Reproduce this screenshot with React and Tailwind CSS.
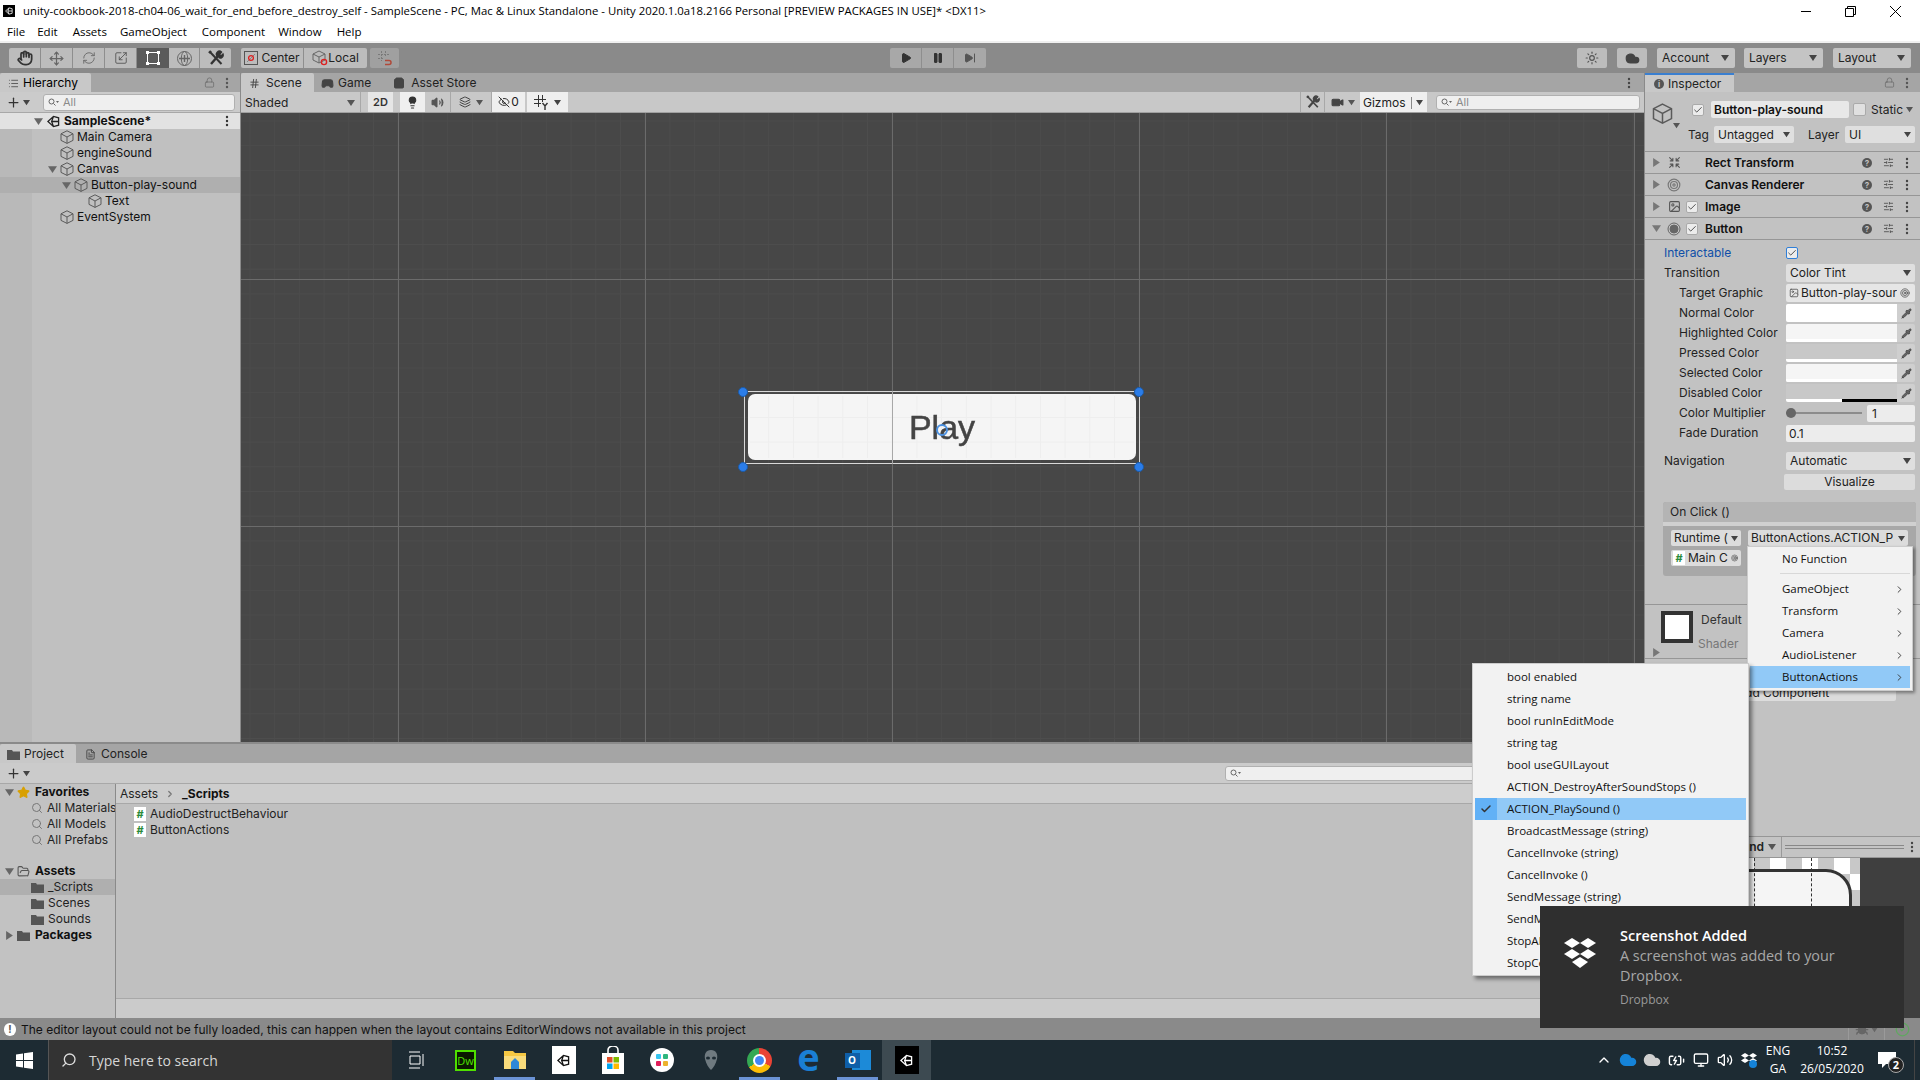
import { Hand, Move, RefreshCw, Scaling, Play, Pause, SkipForward, Sun, Cloud, Search, Lock, Star, ChevronRight, ChevronUp, Volume2, Monitor, BatteryCharging, Lightbulb, Video, Layers, EyeOff, Hash, Check, List, Pipette, Image, SlidersHorizontal, FolderOpen, Gamepad2, ShoppingBag, FileText, Shrink, Target, Plus, Bug, CircleCheck } from "lucide-react";

const Tri = ({ dir = "down", color = "#555", size = 8, className = "" }) => (
  <svg width={size} height={size} viewBox="0 0 8 8" className={`shrink-0 ${className}`}>
    {dir === "down" ? <polygon points="0,1 8,1 4,7" fill={color} /> : <polygon points="1,0 7,4 1,8" fill={color} />}
  </svg>
);

const Cube = ({ size = 14, color = "#5a5a5a" }) => (
  <svg width={size} height={size} viewBox="0 0 14 14" fill="none" stroke={color} strokeWidth="1" className="shrink-0">
    <path d="M7 .8 13 3.8V10.4L7 13.4 1 10.4V3.8Z M1 3.8 7 7 13 3.8 M7 7V13.4" />
  </svg>
);

const Dots = ({ color = "#444" }) => (
  <svg width="4" height="12" viewBox="0 0 4 12" className="shrink-0">
    <circle cx="2" cy="2" r="1.2" fill={color} />
    <circle cx="2" cy="6" r="1.2" fill={color} />
    <circle cx="2" cy="10" r="1.2" fill={color} />
  </svg>
);

const UnityMark = ({ size = 14, color = "#222" }) => (
  <svg width={size} height={size} viewBox="0 0 14 14" fill="none" stroke={color} strokeWidth="1.4" className="shrink-0">
    <path d="M1 7 7 1.5 12.5 3V11L7 12.5Z M5 7H12.5 M7 1.5 5 7 7 12.5" />
  </svg>
);

const ToolsIcon = ({ size = 16, color = "#333" }) => (
  <svg width={size} height={size} viewBox="0 0 16 16" fill="none" stroke={color} className="shrink-0">
    <path d="M3 14 10 6" strokeWidth="2.4" />
    <path d="M9.5 6.5A3 3 0 0 1 13.5 2L11.5 4.5 13 6 15 4A3 3 0 0 1 10.5 7.5" strokeWidth="1.4" fill={color} />
    <path d="M2 2 13.5 14" strokeWidth="2" />
    <path d="M1 3 3 1" strokeWidth="2.4" />
  </svg>
);

const RectTool = () => (
  <svg width="16" height="16" viewBox="0 0 16 16" fill="#fff">
    <rect x="2.5" y="2.5" width="11" height="11" fill="none" stroke="#fff" />
    <rect x="1" y="1" width="3" height="3" />
    <rect x="12" y="1" width="3" height="3" />
    <rect x="1" y="12" width="3" height="3" />
    <rect x="12" y="12" width="3" height="3" />
  </svg>
);

const TransformTool = () => (
  <svg width="17" height="17" viewBox="0 0 17 17" fill="none" stroke="#666">
    <circle cx="8.5" cy="8.5" r="7" />
    <ellipse cx="8.5" cy="8.5" rx="3.2" ry="7" />
    <path d="M3 8.5H14 M8.5 5V12" strokeWidth="1.4" />
  </svg>
);

const GridY = () => (
  <svg width="15" height="15" viewBox="0 0 15 15" fill="none" stroke="#333" className="shrink-0">
    <path d="M4.5 0V12 M8.5 0V7 M0 4.5H12 M0 8.5H7" />
    <path d="M8.5 8 11 11 13.5 8 M11 11V15" strokeWidth="1.4" />
  </svg>
);

const SnapIcon = () => (
  <svg width="16" height="16" viewBox="0 0 16 16" fill="none" stroke="#7a7a7a">
    <path d="M4.5 1V11 M8.5 1V6 M1 4.5H12 M1 8.5H6" strokeDasharray="2 1" />
    <path d="M8 10.5H12A2 2 0 0 1 12 14.5H8" stroke="#b04a3a" strokeWidth="1.5" />
  </svg>
);

const ScriptIcon = () => (
  <span className="w-[12px] h-[14px] bg-white flex items-center justify-center text-[#2a8a3a] text-[11px] font-bold leading-none shrink-0">#</span>
);

const FolderIcon = () => (
  <svg width="13" height="11" viewBox="0 0 13 11" className="shrink-0">
    <path d="M0 1H5L6 2.5H13V11H0Z" fill="#555" />
  </svg>
);

const Check12 = ({ blue }) => (
  <span className={`w-[12px] h-[12px] rounded-[2px] flex items-center justify-center bg-[#ececec] border shrink-0 ${blue ? "border-[#2f7fd8]" : "border-[#aaa]"}`}>
    <Check size={10} strokeWidth={2} color="#333" />
  </span>
);

const Magnifier = () => (
  <svg width="11" height="8" viewBox="0 0 11 8" fill="none" stroke="#666" className="shrink-0">
    <circle cx="3.5" cy="3.5" r="2.5" />
    <path d="M5.5 5.5 7.5 7.5" />
    <polygon points="8,3 11,3 9.5,5" fill="#666" stroke="none" />
  </svg>
);

const SearchBox = ({ className = "", text = "All" }) => (
  <div className={`h-[15px] rounded-[3px] bg-[#efefef] border border-[#b0b0b0] flex items-center pl-[4px] gap-[4px] text-[#8a8a8a] text-[11px] ${className}`}>
    <Magnifier />
    {text}
  </div>
);

const TitleBar = () => (
  <div className="h-[22px] bg-white flex items-center [font-family:'Open_Sans',sans-serif] text-[11.37px] text-black relative">
    <div className="w-[12px] h-[12px] bg-black ml-[3px] mr-[8px] flex items-center justify-center">
      <UnityMark size={8} color="#fff" />
    </div>
    <span className="whitespace-nowrap">unity-cookbook-2018-ch04-06_wait_for_end_before_destroy_self - SampleScene - PC, Mac &amp; Linux Standalone - Unity 2020.1.0a18.2166 Personal [PREVIEW PACKAGES IN USE]* &lt;DX11&gt;</span>
    <div className="ml-auto flex items-center gap-[34px] pr-[19px]">
      <div className="w-[10px] h-px bg-black" />
      <svg width="11" height="11" viewBox="0 0 11 11" fill="none" stroke="#000"><path d="M.5 2.5H8.5V10.5H.5Z M2.5 2.5V.5H10.5V8.5H8.5" /></svg>
      <svg width="11" height="11" viewBox="0 0 11 11" stroke="#000" strokeWidth="1"><path d="M0 0 11 11M11 0 0 11" /></svg>
    </div>
  </div>
);

const menuNames = ["File", "Edit", "Assets", "GameObject", "Component", "Window", "Help"];
const menuGaps = ["ml-[7px]", "ml-[12px]", "ml-[15px]", "ml-[13px]", "ml-[15px]", "ml-[13px]", "ml-[15px]"];

const MenuBar = () => (
  <div className="h-[21px] bg-white border-b-2 border-[#f0f0f0] flex items-center [font-family:'Open_Sans',sans-serif] text-[11.5px] text-black">
    {menuNames.map((name, i) => (
      <span key={name} className={menuGaps[i]}>{name}</span>
    ))}
  </div>
);

const toolBtn = "h-[20px] flex items-center justify-center bg-[#bcbcbc] border-r border-[#8e8e8e]";

const Dropdown = ({ label, w }) => (
  <div className={`h-[20px] rounded-[2px] bg-[#c4c4c4] flex items-center justify-between pl-[5px] pr-[6px] text-[12px] text-[#222] ${w}`}>
    {label}
    <Tri color="#444" />
  </div>
);

const Toolbar = () => (
  <div className="h-[30px] bg-[#8a8a8a] flex items-center relative">
    <div className="ml-[9px] flex rounded-[2px] overflow-hidden">
      <div className={`${toolBtn} w-[32px]`}><Hand size={16} color="#333" strokeWidth={2.6} /></div>
      <div className={`${toolBtn} w-[32px]`}><Move size={15} color="#666" /></div>
      <div className={`${toolBtn} w-[32px]`}><RefreshCw size={14} color="#666" strokeWidth={1.5} /></div>
      <div className={`${toolBtn} w-[32px]`}><Scaling size={14} color="#555" strokeWidth={1.5} /></div>
      <div className="h-[20px] w-[32px] flex items-center justify-center bg-[#5b5b5b]"><RectTool /></div>
      <div className={`${toolBtn} w-[31px]`}><TransformTool /></div>
      <div className="h-[20px] w-[31px] flex items-center justify-center bg-[#bcbcbc]"><ToolsIcon /></div>
    </div>
    <div className="ml-[10px] flex rounded-[2px] overflow-hidden text-[12px] text-[#222]">
      <div className={`${toolBtn} w-[63px] gap-[3px]`}>
        <svg width="14" height="14" viewBox="0 0 14 14" fill="none" className="shrink-0">
          <rect x=".5" y=".5" width="13" height="13" stroke="#555" />
          <path d="M3 11 11 3" stroke="#888" />
          <circle cx="7" cy="7" r="2.4" stroke="#d22" strokeWidth="1.3" />
        </svg>
        Center
      </div>
      <div className="h-[20px] w-[63px] flex items-center justify-center bg-[#bcbcbc]">
        <svg width="16" height="16" viewBox="0 0 16 16" fill="none" className="shrink-0">
          <path d="M7 1 13 4V10L7 13 1 10V4Z M1 4 7 7 13 4 M7 7V13" stroke="#666" />
          <circle cx="12" cy="12" r="2.6" stroke="#d22" strokeWidth="1.4" />
        </svg>
        Local
      </div>
    </div>
    <div className="ml-[3px] w-[29px] h-[20px] rounded-[2px] bg-[#a0a0a0] flex items-center justify-center">
      <SnapIcon />
    </div>
    <div className="ml-[491px] flex rounded-[2px] overflow-hidden">
      <div className="h-[20px] w-[32px] flex items-center justify-center bg-[#a8a8a8] border-r border-[#8e8e8e]"><Play size={12} color="#333" fill="#333" /></div>
      <div className="h-[20px] w-[32px] flex items-center justify-center bg-[#a8a8a8] border-r border-[#8e8e8e]"><Pause size={12} color="#333" fill="#333" /></div>
      <div className="h-[20px] w-[32px] flex items-center justify-center bg-[#a8a8a8]"><SkipForward size={12} color="#555" fill="#555" /></div>
    </div>
    <div className="ml-auto flex items-center pr-[9px]">
      <div className="w-[30px] h-[20px] rounded-[2px] bg-[#bcbcbc] flex items-center justify-center"><Sun size={14} color="#555" /></div>
      <div className="ml-[10px] w-[30px] h-[20px] rounded-[2px] bg-[#bcbcbc] flex items-center justify-center"><Cloud size={15} color="#444" fill="#444" /></div>
      <Dropdown label="Account" w="ml-[10px] w-[78px]" />
      <Dropdown label="Layers" w="ml-[9px] w-[79px]" />
      <Dropdown label="Layout" w="ml-[10px] w-[78px]" />
    </div>
  </div>
);

const treeRows = [
  { name: "Main Camera", pad: "pl-[60px]" },
  { name: "engineSound", pad: "pl-[60px]" },
  { name: "Canvas", pad: "pl-[60px]", open: true },
  { name: "Button-play-sound", pad: "pl-[74px]", open: true, sel: true },
  { name: "Text", pad: "pl-[88px]" },
  { name: "EventSystem", pad: "pl-[60px]" },
];

const Hierarchy = () => (
  <div className="w-[241px] shrink-0 flex flex-col bg-[#c0c0c0] border-r border-[#8a8a8a]">
    <div className="h-[19px] bg-[#a5a5a5] flex items-center text-[12px]">
      <div className="w-[91px] h-full bg-[#c8c8c8] rounded-t-[2px] flex items-center pl-[8px] pt-[1px] gap-[4px]">
        <List size={11} color="#555" />
        Hierarchy
      </div>
      <div className="ml-auto flex items-center gap-[10px] pr-[11px]">
        <Lock size={11} color="#666" strokeWidth={1.5} />
        <Dots color="#555" />
      </div>
    </div>
    <div className="h-[21px] bg-[#cbcbcb] flex items-center pl-[6px] border-b border-[#a8a8a8]">
      <Plus size={15} color="#333" strokeWidth={2} />
      <Tri color="#444" size={7} className="ml-[2px]" />
      <SearchBox className="ml-[13px] w-[192px] h-[17px]" />
    </div>
    <div className="h-[16px] bg-[#e2e2e2] flex items-center pl-[34px] gap-[4px] text-[12px] font-bold text-[#111]">
      <Tri color="#666" size={9} />
      <UnityMark size={13} />
      SampleScene*
      <span className="ml-auto pr-[11px]"><Dots color="#333" /></span>
    </div>
    <div className="flex-1 bg-[linear-gradient(90deg,#b9b9b9_32px,#c0c0c0_32px)]">
      {treeRows.map((r) => (
        <div key={r.name} className={`h-[16px] flex items-center gap-[3px] text-[12px] text-[#111] ${r.pad} ${r.sel ? "bg-[#afafaf]" : ""}`}>
          {r.open && <Tri color="#666" size={9} className="ml-[-12px]" />}
          <Cube />
          {r.name}
        </div>
      ))}
    </div>
  </div>
);

const majorX = [157, 404, 651, 898, 1145, 1393];
const majorY = [166, 413];

const minorLines = Array.from({ length: 58 }, (_, i) => 9 + i * 24.7);

const SceneCanvas = () => (
  <div className="flex-1 relative bg-[#474747] overflow-hidden">
    <svg width="1403" height="629" className="absolute inset-0">
      {minorLines.map((v) => <line key={`x${v}`} x1={v} x2={v} y1="0" y2="629" stroke="#4d4d4d" />)}
      {minorLines.slice(0, 26).map((v) => <line key={`y${v}`} y1={v - 1} y2={v - 1} x1="0" x2="1403" stroke="#4d4d4d" />)}
      {majorX.map((v) => <line key={v} x1={v + 0.5} x2={v + 0.5} y1="0" y2="629" stroke="#6b6b6b" />)}
      {majorY.map((v) => <line key={v} y1={v + 0.5} y2={v + 0.5} x1="0" x2="1403" stroke="#6b6b6b" />)}
    </svg>
    {/* the Play button placed on the scene */}
    <div className="absolute left-[503px] top-[278px] w-[396px] h-[73px] border border-[#d8d8d8]" />
    <div className="absolute left-[507px] top-[281px] w-[388px] h-[66px] rounded-[7px] bg-[#f5f5f5] overflow-hidden">
      <svg width="388" height="66" className="absolute inset-0">
        {minorLines.filter((v) => v > 507 && v < 895).map((v) => <line key={v} x1={v - 507} x2={v - 507} y1="2" y2="64" stroke="#eeeeee" />)}
        {minorLines.filter((v) => v > 281 && v < 347).map((v) => <line key={v} y1={v - 282} y2={v - 282} x1="2" x2="386" stroke="#eeeeee" />)}
      </svg>
      <div className="absolute inset-0 flex items-center justify-center text-[34px] text-[#444] [-webkit-text-stroke:0.5px_#444] [font-family:'Liberation_Sans',sans-serif] blur-[0.7px]">
        Play
      </div>
    </div>
    <div className="absolute left-[651px] top-[278px] w-px h-[73px] bg-[#a8a8a8]" />
    <div className="absolute left-[695px] top-[311px] w-[12px] h-[12px] rounded-full border-2 border-[#4a90e0]" />
    {[["left-[497px]", "top-[274px]"], ["left-[893px]", "top-[274px]"], ["left-[497px]", "top-[349px]"], ["left-[893px]", "top-[349px]"]].map(([l, t]) => (
      <div key={l + t} className={`absolute ${l} ${t} w-[10px] h-[10px] rounded-full bg-[#2b7de9] border border-[#1a5aa8]`} />
    ))}
  </div>
);

const sceneBtn = "h-full flex items-center justify-center";

const Scene = () => (
  <div className="flex-1 flex flex-col min-w-0 text-[12px] text-[#222]">
    <div className="h-[19px] bg-[#a5a5a5] flex items-center">
      <div className="w-[73px] h-full bg-[#c8c8c8] rounded-t-[2px] flex items-center pl-[8px] pt-[1px] gap-[6px]">
        <Hash size={11} color="#444" />
        Scene
      </div>
      <div className="ml-[7px] pt-[1px] flex items-center gap-[4px]"><Gamepad2 size={13} color="#444" fill="#444" />Game</div>
      <div className="ml-[22px] pt-[1px] flex items-center gap-[6px]"><ShoppingBag size={12} color="#444" fill="#444" />Asset Store</div>
      <span className="ml-auto pr-[13px]"><Dots color="#444" /></span>
    </div>
    <div className="h-[21px] bg-[#c8c8c8] flex items-stretch border-b border-[#a0a0a0]">
      <div className="w-[120px] flex items-center justify-between pl-[4px] pr-[5px] pt-[1px] border-r border-[#a8a8a8]">
        Shaded
        <Tri color="#555" />
      </div>
      <div className={`${sceneBtn} ml-[7px] w-[25px] bg-[#e6e6e6] text-[11px] font-semibold text-[#333]`}>2D</div>
      <div className={`${sceneBtn} ml-[7px] w-[25px] bg-[#efefef]`}><Lightbulb size={13} color="#333" fill="#333" /></div>
      <div className={`${sceneBtn} w-[26px] border-r border-[#a8a8a8]`}><Volume2 size={13} color="#555" fill="#555" /></div>
      <div className={`${sceneBtn} w-[41px] gap-[5px] border-r border-[#a8a8a8]`}><Layers size={12} color="#444" /><Tri color="#555" size={7} /></div>
      <div className={`${sceneBtn} w-[33px] bg-[#efefef] gap-[1px]`}><EyeOff size={12} color="#333" />0</div>
      <div className={`${sceneBtn} ml-[2px] w-[41px] bg-[#efefef] gap-[5px]`}><GridY /><Tri color="#444" size={7} /></div>
      <div className="ml-auto flex items-stretch pr-[4px]">
        <div className={`${sceneBtn} w-[25px] border-x border-[#a8a8a8]`}><ToolsIcon size={14} color="#444" /></div>
        <div className={`${sceneBtn} w-[35px] gap-[4px]`}><Video size={13} color="#444" fill="#444" /><Tri color="#555" size={7} /></div>
        <div className="h-full w-[67px] bg-[#efefef] flex items-center pl-[3px] pt-[1px]">
          Gizmos
          <span className="ml-[5px] w-px h-[12px] bg-[#888]" />
          <Tri color="#444" size={7} className="ml-[4px]" />
        </div>
        <SearchBox className="ml-[9px] w-[204px] self-center" />
      </div>
    </div>
    <SceneCanvas />
  </div>
);

const favs = ["All Materials", "All Models", "All Prefabs"];
const dirs = ["_Scripts", "Scenes", "Sounds"];

const Project = () => (
  <div className="h-[276px] flex flex-col pt-[2px] bg-[#8a8a8a] text-[12px] text-[#222]">
    <div className="h-[19px] bg-[#a5a5a5] flex items-center">
      <div className="w-[76px] h-full bg-[#c8c8c8] rounded-t-[2px] flex items-center pl-[7px] pt-[1px] gap-[4px]">
        <FolderIcon />
        Project
      </div>
      <div className="ml-[9px] pt-[1px] flex items-center gap-[5px]"><FileText size={11} color="#444" />Console</div>
    </div>
    <div className="h-[21px] bg-[#cbcbcb] flex items-center pl-[6px] border-b border-[#a8a8a8]">
      <Plus size={15} color="#333" strokeWidth={2} />
      <Tri color="#444" size={7} className="ml-[2px]" />
      <SearchBox text="" className="ml-[1195px] w-[300px] h-[13px]" />
    </div>
    <div className="flex-1 flex min-h-0">
      <div className="w-[116px] shrink-0 bg-[#c2c2c2] border-r border-[#8a8a8a] overflow-hidden">
        <div className="h-[16px] flex items-center pl-[5px] gap-[3px] font-bold text-[#111]">
          <Tri color="#666" size={9} />
          <Star size={13} color="#d8a000" fill="#d8a000" />
          <span className="ml-[2px]">Favorites</span>
        </div>
        {favs.map((f) => (
          <div key={f} className="h-[16px] flex items-center pl-[31px] gap-[4px] whitespace-nowrap">
            <Search size={12} color="#777" className="shrink-0" />
            {f}
          </div>
        ))}
        <div className="h-[15px]" />
        <div className="h-[16px] flex items-center pl-[5px] gap-[3px] font-bold text-[#111]">
          <Tri color="#666" size={9} />
          <FolderOpen size={13} color="#555" />
          <span className="ml-[2px]">Assets</span>
        </div>
        {dirs.map((d, i) => (
          <div key={d} className={`h-[16px] flex items-center pl-[31px] gap-[4px] ${i === 0 ? "bg-[#afafaf]" : ""}`}>
            <FolderIcon />
            {d}
          </div>
        ))}
        <div className="h-[16px] flex items-center pl-[5px] gap-[3px] font-bold text-[#111]">
          <Tri dir="right" color="#666" size={9} />
          <FolderIcon />
          <span className="ml-[2px]">Packages</span>
        </div>
      </div>
      <div className="flex-1 flex flex-col bg-[#c0c0c0]">
        <div className="h-[20px] bg-[#cdcdcd] border-b border-[#a8a8a8] flex items-center pl-[4px] gap-[7px]">
          Assets
          <ChevronRight size={10} color="#777" strokeWidth={3} />
          <span className="font-bold text-[#111]">_Scripts</span>
        </div>
        <div className="flex-1 pl-[18px] pt-[2px]">
          {["AudioDestructBehaviour", "ButtonActions"].map((f) => (
            <div key={f} className="h-[16px] flex items-center gap-[4px]"><ScriptIcon />{f}</div>
          ))}
        </div>
        <div className="h-[20px] bg-[#cbcbcb] border-t border-[#a8a8a8]" />
      </div>
    </div>
  </div>
);

const CompRow = ({ name, icon, check, open }) => (
  <div className="h-[22px] border-b border-[#969696] flex items-center text-[12px] font-semibold text-[#111]">
    <span className="w-[20px] pl-[7px] shrink-0"><Tri dir={open ? "down" : "right"} color="#777" size={9} /></span>
    <span className="w-[18px] shrink-0 flex justify-center">{icon}</span>
    <span className="w-[15px] pl-[3px] shrink-0">{check && <Check12 />}</span>
    <span className="ml-[7px]">{name}</span>
    <span className="ml-auto flex items-center pr-[11px] gap-[11px]">
      <span className="w-[10px] h-[10px] rounded-full bg-[#555] text-[#c2c2c2] text-[8px] font-bold leading-[10px] text-center">?</span>
      <SlidersHorizontal size={11} color="#555" />
      <Dots color="#444" />
    </span>
  </div>
);

const Field = ({ label, children, sub = true, blue }) => (
  <div className="h-[20px] flex items-center text-[12px]">
    <span className={`w-[141px] shrink-0 whitespace-nowrap ${sub ? "pl-[34px]" : "pl-[19px]"} ${blue ? "text-[#0f4fa8]" : "text-[#222]"}`}>{label}</span>
    {children}
  </div>
);

const InDrop = ({ label }) => (
  <div className="w-[129px] h-[18px] rounded-[2px] bg-[#dfdfdf] flex items-center justify-between pl-[4px] pr-[4px] text-[12px] text-[#222]">
    {label}
    <Tri color="#444" />
  </div>
);

const ColorField = ({ top, bar }) => (
  <div className="w-[129px] h-[18px] rounded-[2px] bg-[#cfcfcf] flex overflow-hidden">
    <div className={`w-[111px] flex flex-col ${top}`}>
      <div className="flex-1" />
      {bar}
    </div>
    <div className="flex-1 flex items-center justify-center"><Pipette size={11} color="#444" fill="#666" /></div>
  </div>
);

const Inspector = () => (
  <div className="w-[276px] shrink-0 bg-[#c2c2c2] border-l border-[#8a8a8a] flex flex-col text-[#222] overflow-hidden">
    <div className="h-[19px] bg-[#a5a5a5] flex items-center text-[12px]">
      <div className="w-[89px] h-full bg-[#c8c8c8] border-t-2 border-[#3a7fd0] flex items-center pl-[9px] gap-[4px]">
        <span className="w-[10px] h-[10px] rounded-full bg-[#555] text-[#c8c8c8] text-[8px] font-bold leading-[10px] text-center">i</span>
        Inspector
      </div>
      <div className="ml-auto flex items-center gap-[10px] pr-[11px]">
        <Lock size={11} color="#666" strokeWidth={1.5} />
        <Dots color="#555" />
      </div>
    </div>
    <div className="h-[60px] border-b border-[#969696] flex text-[12px] relative">
      <div className="w-[47px] shrink-0 pl-[7px] pt-[11px] flex items-start">
        <Cube size={21} />
        <Tri color="#555" size={7} className="mt-[19px]" />
      </div>
      <div className="flex-1 pt-[9px]">
        <div className="flex items-center h-[17px]">
          <Check12 />
          <div className="ml-[7px] w-[138px] h-[17px] rounded-[2px] bg-[#e8e8e8] font-semibold text-[#111] pl-[3px] leading-[17px]">Button-play-sound</div>
          <span className="ml-[4px] w-[13px] h-[13px] bg-[#e0e0e0] rounded-[2px] border border-[#aaa]" />
          <span className="ml-[5px]">Static</span>
          <Tri color="#555" size={7} className="ml-[3px]" />
        </div>
        <div className="flex items-center h-[17px] mt-[8px] -ml-[4px]">
          <span className="w-[26px]">Tag</span>
          <div className="w-[80px] h-[17px] rounded-[2px] bg-[#dfdfdf] flex items-center justify-between px-[4px]">Untagged<Tri color="#444" size={7} /></div>
          <span className="ml-[14px] w-[37px]">Layer</span>
          <div className="w-[70px] h-[17px] rounded-[2px] bg-[#dfdfdf] flex items-center justify-between px-[4px]">UI<Tri color="#444" size={7} /></div>
        </div>
      </div>
    </div>
    <CompRow name="Rect Transform" icon={<Shrink size={13} color="#555" />} />
    <CompRow name="Canvas Renderer" icon={<Target size={14} color="#777" />} />
    <CompRow name="Image" icon={<Image size={13} color="#555" />} check />
    <CompRow
      name="Button"
      icon={
        <svg width="14" height="14" viewBox="0 0 14 14" fill="#666" stroke="#666">
          <circle cx="7" cy="7" r="6" fill="none" />
          <circle cx="7" cy="7" r="4" />
        </svg>
      }
      check
      open
    />
    <div className="pt-[3px]">
      <Field label="Interactable" sub={false} blue><Check12 blue /></Field>
      <Field label="Transition" sub={false}><InDrop label="Color Tint" /></Field>
      <Field label="Target Graphic">
        <div className="w-[129px] h-[18px] rounded-[2px] bg-[#e6e6e6] flex items-center pl-[3px] gap-[2px] whitespace-nowrap">
          <Image size={10} color="#555" className="shrink-0" />
          <span className="w-[96px] overflow-hidden">Button-play-sour</span>
          <span className="ml-auto pr-[5px]"><Target size={10} color="#555" /></span>
        </div>
      </Field>
      <Field label="Normal Color"><ColorField top="bg-white" /></Field>
      <Field label="Highlighted Color"><ColorField top="bg-[#f5f5f5]" bar={<div className="h-[3px] bg-white" />} /></Field>
      <Field label="Pressed Color"><ColorField top="bg-[#c8c8c8]" bar={<div className="h-[3px] bg-white" />} /></Field>
      <Field label="Selected Color"><ColorField top="bg-[#f5f5f5]" bar={<div className="h-[3px] bg-white" />} /></Field>
      <Field label="Disabled Color">
        <ColorField top="bg-[#c8c8c8]" bar={<div className="h-[3px] flex"><div className="w-[56px] bg-white" /><div className="flex-1 bg-black" /></div>} />
      </Field>
      <Field label="Color Multiplier">
        <div className="w-[129px] h-[18px] flex items-center">
          <div className="w-[76px] h-[2px] bg-[#8c8c8c] flex items-center">
            <span className="w-[10px] h-[10px] rounded-full bg-[#666]" />
          </div>
          <div className="ml-[5px] flex-1 h-[17px] rounded-[2px] bg-[#ececec] pl-[5px] leading-[17px]">1</div>
        </div>
      </Field>
      <Field label="Fade Duration">
        <div className="w-[129px] h-[17px] rounded-[2px] bg-[#ececec] pl-[3px] leading-[17px]">0.1</div>
      </Field>
      <div className="mt-[8px]">
        <Field label="Navigation" sub={false}><InDrop label="Automatic" /></Field>
      </div>
      <div className="ml-[139px] mt-[3px] w-[131px] h-[16px] rounded-[2px] bg-[#dcdcdc] flex items-center justify-center text-[12px]">Visualize</div>
      <div className="ml-[18px] mt-[12px] w-[253px] h-[74px] rounded-[3px] bg-[#a8a8a8] text-[12px] flex flex-col overflow-hidden">
        <div className="h-[20px] bg-[#b4b4b4] pl-[7px] leading-[20px] shrink-0">On Click ()</div>
        <div className="h-[4px] bg-[#d0d0d0] shrink-0" />
        <div className="flex mt-[4px] pl-[8px] gap-[7px]">
          <div className="w-[70px] h-[16px] rounded-[2px] bg-[#dcdcdc] flex items-center justify-between pl-[3px] pr-[3px] whitespace-nowrap">Runtime (<Tri color="#444" size={7} /></div>
          <div className="w-[160px] h-[16px] rounded-[2px] bg-[#dcdcdc] flex items-center justify-between pl-[3px] pr-[3px] whitespace-nowrap">ButtonActions.ACTION_P<Tri color="#444" size={7} /></div>
        </div>
        <div className="flex mt-[4px] pl-[8px]">
          <div className="w-[70px] h-[16px] rounded-[2px] bg-[#dcdcdc] flex items-center pl-[2px] gap-[3px] whitespace-nowrap"><ScriptIcon />Main C<Target size={10} color="#555" className="ml-auto mr-[3px]" /></div>
        </div>
      </div>
      <div className="mt-[28px] h-[55px] border-y border-[#969696] flex pl-[16px] pt-[6px] text-[12px] relative">
        <div className="w-[32px] h-[32px] border-[4px] border-[#333] bg-white shrink-0" />
        <div className="ml-[8px]">
          <div className="text-[#333] leading-[16px] pt-[1px]">Default</div>
          <div className="text-[#777] mt-[7px] -ml-[3px]">Shader</div>
        </div>
        <Tri dir="right" color="#777" size={9} className="absolute left-[7px] top-[43px]" />
      </div>
      <div className="ml-[25px] mt-[26px] w-[226px] h-[16px] rounded-[2px] bg-[#dcdcdc] text-center text-[12px] leading-[16px]">Add Component</div>
    </div>
    <div className="mt-[135px] h-[22px] bg-[#c4c4c4] border-t border-[#969696] border-b flex items-center text-[12px] font-semibold shrink-0">
      <span className="w-[119px] text-right whitespace-nowrap">Button-play-sound</span>
      <Tri color="#555" size={8} className="ml-[4px]" />
      <div className="ml-[5px] w-px h-full bg-[#999]" />
      <div className="ml-[3px] flex-1 h-[4px] border-y border-[#888]" />
      <span className="pl-[6px] pr-[6px]"><Dots color="#444" /></span>
    </div>
    <div className="flex-1 bg-[#3f3f3f] flex justify-center">
      <div className="w-[154px] h-full relative bg-[conic-gradient(#c8c8c8_25%,#fff_0_50%,#c8c8c8_0_75%,#fff_0)] bg-[length:32px_32px]">
        <div className="absolute left-[8px] right-[8px] top-[11px] h-[120px] rounded-[26px] border-[3px] border-[#333] bg-[#f5f5f5] blur-[0.6px]" />
        <div className="absolute left-[48px] top-0 bottom-0 border-l border-dashed border-[#333]" />
        <div className="absolute left-[105px] top-0 bottom-0 border-l border-dashed border-[#333]" />
      </div>
    </div>
  </div>
);

const StatusBar = () => (
  <div className="h-[22px] bg-[#8a8a8a] flex items-center text-[12px] text-[#111]">
    <span className="ml-[4px] w-[12px] h-[13px] rounded-full bg-white text-[#555] text-[10px] font-bold leading-[13px] text-center">!</span>
    <span className="ml-[5px] pt-[1px]">The editor layout could not be fully loaded, this can happen when the layout contains EditorWindows not available in this project</span>
    <div className="ml-auto h-full flex items-center">
      <div className="h-full w-[37px] border-x border-[#9a9a9a] flex items-center justify-center gap-[2px]">
        <Bug size={14} color="#666" fill="#666" />
        <Tri color="#666" size={7} />
      </div>
      <div className="w-[35px] flex justify-center"><CircleCheck size={15} color="#5fa85f" /></div>
    </div>
  </div>
);

const WinSlot = ({ children, line, active }) => (
  <div className={`w-[49px] h-full flex items-center justify-center relative shrink-0 ${active ? "bg-[#3d4a51]" : ""}`}>
    {children}
    {line && <div className="absolute bottom-0 left-[4px] right-[4px] h-[3px] bg-[#6b93d6]" />}
  </div>
);

const UnityTile = ({ bg, color }) => (
  <div className={`w-[24px] h-[28px] flex items-center justify-center ${bg}`}>
    <UnityMark size={13} color={color} />
  </div>
);

const Taskbar = () => (
  <div className="h-[40px] bg-[#1d2b33] flex items-center text-white [font-family:'Open_Sans',sans-serif] relative">
    <div className="w-[48px] h-full flex items-center justify-center">
      <svg width="17" height="17" viewBox="0 0 17 17" fill="#fff">
        <polygon points="0,2.4 7,1.4 7,8 0,8" />
        <polygon points="8,1.2 17,0 17,8 8,8" />
        <polygon points="0,9 7,9 7,15.6 0,14.6" />
        <polygon points="8,9 17,9 17,17 8,15.8" />
      </svg>
    </div>
    <div className="w-[344px] h-full bg-[#333333] flex items-center pl-[12px] text-[14px] text-[#d6d6d6] gap-[12px] border-l border-[#555]">
      <Search size={16} color="#ddd" className="scale-x-[-1]" />
      Type here to search
    </div>
    <div className="flex items-center h-full">
      <WinSlot>
        <svg width="16" height="18" viewBox="0 0 16 18" fill="none" stroke="#fff"><path d="M0 1H11M0 17H11M1 5H11V13H1ZM14 3V15" /></svg>
      </WinSlot>
      <WinSlot>
        <div className="w-[21px] h-[21px] bg-[#0a1a00] border-2 border-[#4fe000] text-[#4fe000] text-[11px] leading-[17px] text-center">Dw</div>
      </WinSlot>
      <WinSlot line>
        <svg width="22" height="20" viewBox="0 0 22 20">
          <path d="M0 1H9L11 3H22V19H0Z" fill="#f6c843" />
          <path d="M0 6H22V19H0Z" fill="#f9dc7c" />
          <path d="M7 12 11 8 15 12V19H7Z" fill="#2f88d8" />
        </svg>
      </WinSlot>
      <WinSlot><UnityTile bg="bg-white" color="#111" /></WinSlot>
      <WinSlot>
        <svg width="24" height="28" viewBox="0 0 24 28">
          <path d="M1 7H23V28H1Z" fill="#fff" />
          <path d="M7 7V4A5 4 0 0 1 17 4V7" fill="none" stroke="#fff" strokeWidth="1.6" />
          <rect x="6" y="11" width="5.5" height="5.5" fill="#e2502a" />
          <rect x="12.5" y="11" width="5.5" height="5.5" fill="#7fba00" />
          <rect x="6" y="17.5" width="5.5" height="5.5" fill="#00a4ef" />
          <rect x="12.5" y="17.5" width="5.5" height="5.5" fill="#ffb900" />
        </svg>
      </WinSlot>
      <WinSlot>
        <div className="w-[24px] h-[24px] rounded-full bg-white grid grid-cols-2 gap-[2px] p-[6px]">
          <span className="bg-[#36c5f0] rounded-[1px]" />
          <span className="bg-[#2eb67d] rounded-[1px]" />
          <span className="bg-[#e01e5a] rounded-[1px]" />
          <span className="bg-[#ecb22e] rounded-[1px]" />
        </div>
      </WinSlot>
      <WinSlot>
        <svg width="18" height="24" viewBox="0 0 18 24" fill="#6f7a80"><path d="M9 2C14 2 16 6 15 11 14 16 11 20 9 22 7 20 4 16 3 11 2 6 4 2 9 2Z" /><ellipse cx="6" cy="10" rx="2" ry="1.5" fill="#1d2b33" /><ellipse cx="12" cy="10" rx="2" ry="1.5" fill="#1d2b33" /></svg>
      </WinSlot>
      <WinSlot line>
        <div className="w-[25px] h-[25px] rounded-full bg-[conic-gradient(#ea4335_0_33%,#fbbc05_33%_66%,#34a853_66%_100%)] flex items-center justify-center">
          <div className="w-[13px] h-[13px] rounded-full bg-white flex items-center justify-center">
            <div className="w-[9px] h-[9px] rounded-full bg-[#4285f4]" />
          </div>
        </div>
      </WinSlot>
      <WinSlot>
        <span className="text-[38px] leading-none font-bold text-[#1a7fd4] mt-[-9px]">e</span>
      </WinSlot>
      <WinSlot line>
        <div className="w-[26px] h-[26px] flex items-center relative">
          <div className="absolute right-0 top-[3px] w-[19px] h-[20px] bg-[#1c8ad8]" />
          <span className="relative w-[15px] h-[15px] bg-[#0f5fa8] text-white text-[10px] font-bold leading-[15px] text-center">O</span>
        </div>
      </WinSlot>
      <WinSlot active><UnityTile bg="bg-black" color="#fff" /></WinSlot>
    </div>
    <div className="ml-auto flex items-center h-full">
      <ChevronUp size={16} color="#fff" />
      <Cloud size={18} color="#1583d8" fill="#1583d8" className="ml-[7px]" />
      <Cloud size={18} color="#d0d0d0" fill="#d0d0d0" className="ml-[6px]" />
      <BatteryCharging size={17} color="#fff" className="ml-[7px]" />
      <Monitor size={16} color="#fff" className="ml-[8px]" />
      <Volume2 size={16} color="#fff" className="ml-[8px]" />
      <svg width="16" height="16" viewBox="0 0 16 16" fill="#fff" className="ml-[8px]">
        <polygon points="4,1 8,3.5 4,6 0,3.5" /><polygon points="12,1 16,3.5 12,6 8,3.5" /><polygon points="4,6 8,8.5 4,11 0,8.5" /><polygon points="12,6 16,8.5 12,11 8,8.5" />
        <circle cx="12" cy="12" r="4" fill="#1583d8" />
      </svg>
      <div className="ml-[5px] w-[32px] text-center text-[12px] leading-[18px]"><div>ENG</div><div>GA</div></div>
      <div className="ml-[5px] w-[66px] text-center text-[12px] leading-[18px] whitespace-nowrap"><div>10:52</div><div>26/05/2020</div></div>
      <div className="ml-[3px] mr-[5px] w-[47px] flex items-center pl-[10px] relative h-full border-r border-[#444]">
        <svg width="18" height="16" viewBox="0 0 18 16" fill="#fff"><path d="M0 0H18V12H8L4 16V12H0Z" /></svg>
        <span className="absolute left-[20px] top-[17px] w-[16px] h-[16px] rounded-full bg-[#222] border border-[#aaa] text-[11px] font-bold leading-[14px] text-center">2</span>
      </div>
    </div>
  </div>
);

const MenuRow = ({ label, hot, arrow, checked }) => (
  <div className={`h-[22px] flex items-center whitespace-nowrap ${hot ? "bg-[#91c9f7]" : ""}`}>
    <span className={`w-[22px] h-full flex items-center justify-center shrink-0 ${checked ? "bg-[#62b1f6]" : ""}`}>
      {checked && <Check size={12} strokeWidth={3} color="#333" />}
    </span>
    <span className="ml-[10px]">{label}</span>
    {arrow && <ChevronRight size={11} color="#333" className="ml-auto mr-[5px]" />}
  </div>
);

const methodItems = [
  "bool enabled", "string name", "bool runInEditMode", "string tag", "bool useGUILayout",
  "ACTION_DestroyAfterSoundStops ()", "ACTION_PlaySound ()", "BroadcastMessage (string)",
  "CancelInvoke (string)", "CancelInvoke ()", "SendMessage (string)",
  "SendMessageUpwards (string)", "StopAllCoroutines ()", "StopCoroutine (string)",
];

const Menus = () => (
  <div className="[font-family:'Open_Sans',sans-serif] text-[11.5px] text-[#111]">
    <div className="absolute left-[1747px] top-[546px] w-[166px] h-[145px] bg-[#f2f2f2] border border-[#ccc] shadow-[2px_2px_3px_rgba(0,0,0,0.4)] px-[2px] pt-[1px]">
      <div className="h-[22px] flex items-center pl-[32px]">No Function</div>
      <div className="h-px bg-[#d8d8d8] ml-[30px] mt-[3px] mb-[4px]" />
      {["GameObject", "Transform", "Camera", "AudioListener"].map((n) => (
        <MenuRow key={n} label={n} arrow />
      ))}
      <MenuRow label="ButtonActions" arrow hot />
    </div>
    <div className="absolute left-[1472px] top-[663px] w-[277px] h-[313px] bg-[#f2f2f2] border border-[#ccc] shadow-[3px_3px_4px_rgba(0,0,0,0.45)] px-[2px] pt-[2px]">
      {methodItems.map((m) => (
        <MenuRow key={m} label={m} hot={m === "ACTION_PlaySound ()"} checked={m === "ACTION_PlaySound ()"} />
      ))}
    </div>
  </div>
);

const Toast = () => (
  <div className="absolute left-[1540px] top-[906px] w-[364px] h-[122px] bg-[#2f2f2f] [font-family:'Open_Sans',sans-serif] flex">
    <div className="w-[80px] shrink-0 pl-[24px] pt-[32px]">
      <svg width="32" height="30" viewBox="0 0 32 30" fill="#fff">
        <polygon points="8,0 16,5 8,10 0,5" /><polygon points="24,0 32,5 24,10 16,5" />
        <polygon points="8,11 16,16 8,21 0,16" /><polygon points="24,11 32,16 24,21 16,16" />
        <polygon points="16,19 24,24 16,30 8,24" />
      </svg>
    </div>
    <div className="pt-[20px]">
      <div className="text-[14.5px] font-semibold text-white leading-[20px]">Screenshot Added</div>
      <div className="text-[14.4px] text-[#a8a8a8] leading-[20px] w-[240px]">A screenshot was added to your Dropbox.</div>
      <div className="text-[12px] text-[#9a9a9a] mt-[6px] leading-[16px]">Dropbox</div>
    </div>
  </div>
);

export default function App() {
  return (
    <div className="relative w-[1920px] h-[1080px] overflow-hidden bg-white [font-family:Inter,sans-serif]">
      <TitleBar />
      <MenuBar />
      <Toolbar />
      <div className="h-[945px] flex">
        <div className="flex-1 min-w-0 flex flex-col">
          <div className="h-[669px] flex">
            <Hierarchy />
            <Scene />
          </div>
          <Project />
        </div>
        <Inspector />
      </div>
      <StatusBar />
      <Taskbar />
      <Menus />
      <Toast />
    </div>
  );
}
